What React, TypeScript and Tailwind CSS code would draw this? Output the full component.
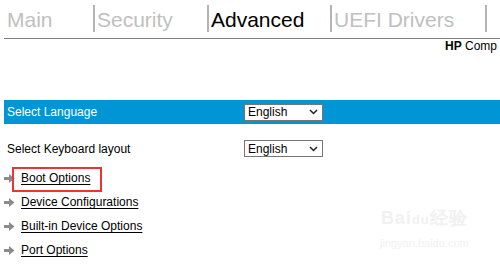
import React from "react";

const Arrow = () => (
  <svg width="11" height="9" viewBox="0 0 11 9" className="shrink-0">
    <rect x="0" y="3" width="6" height="3" fill="#8c8c8c" />
    <polygon points="5,0 10.5,4.5 5,9" fill="#8c8c8c" />
  </svg>
);

const Chevron = () => (
  <svg width="9" height="6" viewBox="0 0 9 6">
    <polyline points="1,1 4.5,4.5 8,1" fill="none" stroke="#222" strokeWidth="1.5" />
  </svg>
);

const FakeSelect = () => (
  <div className="w-[79px] h-[17px] border border-[#767676] bg-white flex items-center justify-between pl-[3px] pr-[4px] text-[12px] text-black leading-none">
    <span>English</span>
    <Chevron />
  </div>
);

const tabs = [
  { label: "Main", w: "w-[89px]", active: false, first: true },
  { label: "Security", w: "w-[114px]", active: false, first: false },
  { label: "Advanced", w: "w-[123px]", active: true, first: false },
  { label: "UEFI Drivers", w: "w-[155px]", active: false, first: false },
];

const links = ["Boot Options", "Device Configurations", "Built-in Device Options", "Port Options"];

export default function App() {
  return (
    <div
      className="relative w-[500px] h-[265px] overflow-hidden bg-white text-black"
      style={{ fontFamily: '"Liberation Sans", Arial, sans-serif' }}
    >
      {/* Tab bar */}
      <div className="ml-[4px] pt-[5px] pb-[6px] border-b border-[#808080] flex">
        {tabs.map((t) => (
          <div
            key={t.label}
            className={`${t.w} h-[27px] shrink-0 ${t.first ? "pl-[3px]" : "border-l-2 border-[#b4b4b4] pl-[2px]"} text-[21px] leading-[29px] whitespace-nowrap ${t.active ? "text-black" : "text-[#c0c0c0]"}`}
          >
            {t.label}
          </div>
        ))}
        <div className="h-[27px] border-l-2 border-[#b4b4b4]" />
      </div>

      {/* Product line */}
      <div className="pl-[445px] text-[12px] leading-[14px] whitespace-nowrap">
        <span className="font-bold">HP</span> Comp
      </div>

      {/* Select Language */}
      <div className="mt-[47px] ml-[4px] h-[24px] bg-[#0096d6] flex items-center">
        <span className="w-[240px] pl-[3px] text-[12px] text-white">Select Language</span>
        <FakeSelect />
      </div>

      {/* Keyboard layout */}
      <div className="mt-[16px] ml-[4px] h-[17px] flex items-center">
        <span className="w-[240px] pl-[3px] text-[12px]">Select Keyboard layout</span>
        <FakeSelect />
      </div>

      {/* Links */}
      <div className="mt-[9px] flex flex-col">
        {links.map((l, i) => (
          <div key={l} className="relative h-[24px] pl-[4px] flex items-center gap-[6px]">
            <Arrow />
            <span className="text-[12px] underline underline-offset-[2px]">{l}</span>
            {i === 0 && (
              <div className="absolute left-[12px] top-[1px] w-[90px] h-[25px] border-2 border-[#ee3333]" />
            )}
          </div>
        ))}
      </div>

      {/* Watermark */}
      <div className="absolute left-[380px] top-[208px] flex flex-col items-center text-[#f1f1f1] pointer-events-none">
        <div className="text-[18px] leading-[20px] font-bold tracking-[1px] whitespace-nowrap">
          Bai<span className="text-[13px]">du</span>经验
        </div>
        <div className="text-[11px] leading-[14px] mt-[6px] whitespace-nowrap">jingyan.baidu.com</div>
      </div>
    </div>
  );
}
